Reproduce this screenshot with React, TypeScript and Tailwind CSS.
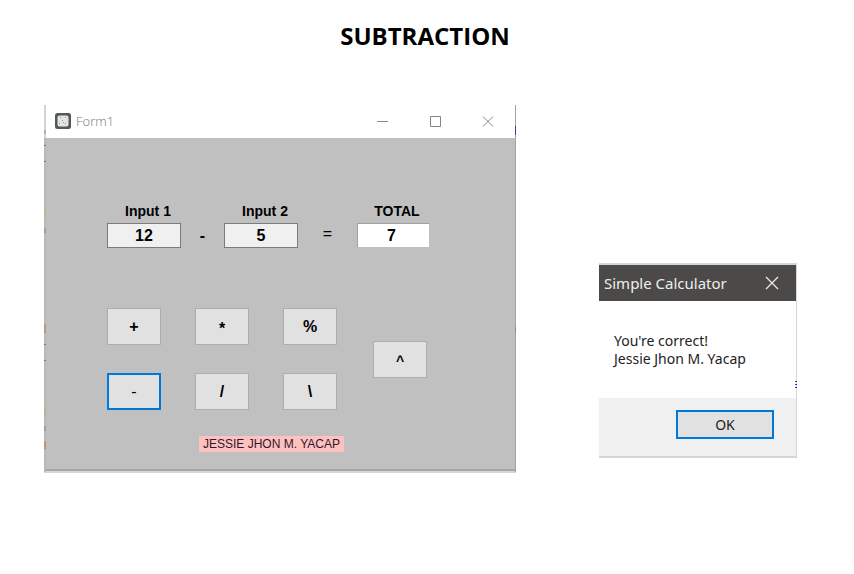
import type { ReactNode } from "react";

function Key({ children, active = false, className = "" }: { children: ReactNode; active?: boolean; className?: string }) {
  return (
    <button
      type="button"
      className={`h-[37px] w-full bg-[#e1e1e1] text-center leading-4 text-black ${
        active ? "border-2 border-[#0078d7] font-normal" : "border border-[#adadad] font-bold"
      } ${className}`}
    >
      {children}
    </button>
  );
}

const fieldClass = "h-[25px] w-full border border-[#7c7c7c] bg-[#f0f0f0] text-center text-base leading-4";

function EdgeMarks() {
  return (
    <>
      <svg className="absolute top-0 left-0 h-[367px] w-0.5" viewBox="0 0 2 367" aria-hidden="true" shapeRendering="crispEdges">
        <rect width="2" height="33" fill="#d4d4d4" />
        <rect y="33" width="2" height="334" fill="#b9b9b9" />
        <rect y="25" width="2" height="4" fill="#c9a79c" />
        <path d="M0 40.5h2M0 56.5h2M0 239.5h2M0 255.5h2" stroke="#777" />
        <rect y="103" width="2" height="8" fill="#c0b49c" />
        <rect y="123" width="2" height="5" fill="#b59a82" />
        <rect y="219" width="2" height="9" fill="#b59a82" />
        <rect y="302" width="2" height="9" fill="#bcb09a" />
        <rect y="321" width="2" height="5" fill="#b59a82" />
        <rect y="336" width="2" height="8" fill="#b59a82" />
      </svg>
      <svg className="absolute top-0 right-0 h-[367px] w-px" viewBox="0 0 1 367" aria-hidden="true" shapeRendering="crispEdges">
        <rect width="1" height="367" fill="#a4a4a4" />
        <rect y="21" width="1" height="9" fill="#4438a0" />
        <rect y="222" width="1" height="6" fill="#958484" />
      </svg>
    </>
  );
}

function FormWindow() {
  return (
    <section className="relative flex flex-col bg-[#c0c0c0]">
      <header className="flex h-[33px] items-center bg-white pr-[22px] pb-px pl-[11px]">
        <svg className="h-4 w-4" viewBox="0 0 16 16" aria-hidden="true">
          <rect x="0" y="0" width="16" height="16" rx="2.5" fill="#55585a" />
          <rect x="2.5" y="2.5" width="11" height="11" rx="2" fill="#e2e4e4" />
          <path d="M5 4.5h1M10 4.5h1M7 7.5h1M4 10.5h1M10 10.5h1M8 9.5h1" stroke="#9a9c9c" strokeWidth="1" />
        </svg>
        <h2 className="ml-[5px] font-['Open_Sans',sans-serif] text-[13px] leading-4 font-light text-[#777]">Form1</h2>
        <div className="ml-auto flex items-center gap-[41px]">
          <button type="button" aria-label="Minimize">
            <svg className="block h-3 w-3" viewBox="0 0 12 12" fill="none" stroke="#8a8a8a"><path d="M1 6.5h11" /></svg>
          </button>
          <button type="button" aria-label="Maximize">
            <svg className="block h-3 w-3" viewBox="0 0 12 12" fill="none" stroke="#858585"><path d="M1.5 1.5h10v10h-10z" /></svg>
          </button>
          <button type="button" aria-label="Close">
            <svg className="block h-3 w-3" viewBox="0 0 12 12" fill="none" stroke="#858585"><path d="M1 1.5l10 10M11 1.5l-10 10" /></svg>
          </button>
        </div>
      </header>

      <div className="flex flex-col border-b-2 border-b-[#a6a6a6] pt-[65px] pb-[17px] pl-[63px]">
        <div className="grid grid-cols-[74px_43px_74px_59px_72px] items-center gap-y-1 text-center font-bold">
          <label htmlFor="first" className="pl-2 text-sm leading-4">Input 1</label>
          <span />
          <label htmlFor="second" className="pl-2 text-sm leading-4">Input 2</label>
          <span />
          <label htmlFor="total" className="pl-2 text-sm leading-4">TOTAL</label>
          <input id="first" readOnly value="12" className={fieldClass} />
          <span className="text-base leading-4">-</span>
          <input id="second" readOnly value="5" className={fieldClass} />
          <span className="pb-1 text-base leading-4 font-normal">=</span>
          <input id="total" readOnly value="7" className="mb-px h-6 w-full border-t border-l border-[#a0a0a0] bg-white pr-1 text-center text-base leading-4" />
        </div>

        <div className="mt-[60px] flex items-center gap-9">
          <div className="grid grid-cols-[54px_54px_54px] gap-x-[34px] gap-y-7">
            <Key className="text-base">+</Key>
            <Key className="pt-1 text-base">*</Key>
            <Key className="text-base">%</Key>
            <Key active className="text-base">-</Key>
            <Key className="text-base">/</Key>
            <Key className="text-base">\</Key>
          </div>
          <div className="w-[54px]">
            <Key className="pt-1 text-sm">^</Key>
          </div>
        </div>

        <p className="mt-[26px] ml-[92px] self-start bg-[#ffc0c0] px-1 text-xs leading-4 whitespace-nowrap text-[#2b1a2b]">
          JESSIE JHON M. YACAP
        </p>
      </div>
      <div className="h-0.5 bg-[#d8d8d8]" />
      <EdgeMarks />
    </section>
  );
}

function MessageBox() {
  return (
    <section className="relative mt-[158px] self-start border-t-2 border-r border-b-2 border-[#d6d6d6] font-['Noto_Sans',sans-serif] text-[#222]">
      <header className="flex h-9 items-center justify-between bg-[#4c4a48] pr-[17px] pl-[5px] text-white">
        <h2 className="text-[15px] leading-5 whitespace-nowrap text-[#eee]">Simple Calculator</h2>
        <button type="button" aria-label="Close">
          <svg className="block h-[14px] w-[14px]" viewBox="0 0 14 14" fill="none" stroke="#e8e8e8" strokeWidth="1.3"><path d="M1 1l12 12M13 1L1 13" /></svg>
        </button>
      </header>
      <p className="bg-white pt-[31px] pr-2 pb-[30px] pl-[15px] text-sm leading-[18px] whitespace-nowrap">
        You're correct!
        <br />
        Jessie Jhon M. Yacap
      </p>
      <footer className="flex justify-end bg-[#f0f0f0] pt-3 pr-[22px] pb-[17px]">
        <button type="button" className="h-[29px] w-[98px] border-2 border-[#0078d7] bg-[#e1e1e1] text-sm leading-4">OK</button>
      </footer>
      <svg className="absolute top-[116px] -right-px h-2 w-0.5" viewBox="0 0 2 8" aria-hidden="true" shapeRendering="crispEdges">
        <path d="M0 .5h2M0 3.5h2M0 6.5h2" stroke="#2a2ad0" />
      </svg>
    </section>
  );
}

export default function App() {
  return (
    <main className="min-h-screen bg-white font-['Liberation_Sans',Arial,sans-serif] text-black">
      <h1 className="pt-5 pr-1 text-center font-['Open_Sans',sans-serif] text-2xl leading-8 font-bold">SUBTRACTION</h1>
      <div className="mt-[53px] grid grid-cols-[472fr_198fr] items-start gap-[83px] pr-[57px] pl-11">
        <FormWindow />
        <MessageBox />
      </div>
    </main>
  );
}
